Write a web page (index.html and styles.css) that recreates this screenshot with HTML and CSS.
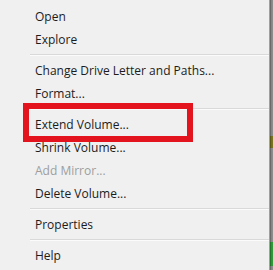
FILE: index.html
```html
<!DOCTYPE html>
<html lang="en">

<head>
    <meta charset="UTF-8" />
    <meta name="viewport" content="width=device-width, initial-scale=1" />
    <title>Volume context menu</title>
    <link rel="stylesheet" href="styles.css">
</head>

<body>
    <div class="menu">
        <div class="item">Open</div>
        <div class="item">Explore</div>
        <div class="sep"></div>
        <div class="item">Change Drive Letter and Paths...</div>
        <div class="item">Format...</div>
        <div class="sep"></div>
        <div class="item marked">Extend Volume...</div>
        <div class="item">Shrink Volume...</div>
        <div class="item disabled">Add Mirror...</div>
        <div class="item">Delete Volume...</div>
        <div class="sep"></div>
        <div class="item">Properties</div>
        <div class="sep"></div>
        <div class="item">Help</div>
    </div>
</body>

</html>
```

FILE: styles.css
```css
* {
    margin: 0;
    padding: 0;
    box-sizing: border-box;
}

body {
    width: 273px;
    height: 270px;
    overflow: hidden;
    font-family: "Open Sans", "Noto Sans", sans-serif;
    /* the disk management window peeking out on the right */
    background: linear-gradient(to bottom,
            #8c8c8c 0, #8c8c8c 136px,
            #7a7420 136px, #7a7420 148px,
            #8c8c8c 148px, #8c8c8c 242px,
            #2f9a3a 242px, #2f9a3a 266px,
            #8c8c8c 266px);
}

.menu {
    width: 270px;
    height: 270px;
    padding-top: 4.5px;
    background: #f0f0f0;
    border-right: 1px solid #a0a0a0;
    box-shadow: 1px 0 1px rgba(0, 0, 0, 0.25);
    display: flex;
    flex-direction: column;
}

.item {
    height: 23px;
    line-height: 23px;
    padding-left: 35px;
    font-size: 12px;
    color: #1c1c1c;
    white-space: nowrap;
    position: relative;
}

.item.disabled {
    color: #9e9e9e;
}

/* red annotation frame round "Extend Volume..." */
.item.marked::after {
    content: '';
    position: absolute;
    left: 23px;
    top: -9.5px;
    width: 170px;
    height: 39px;
    box-sizing: border-box;
    border: 6px solid #e3141e;
}

.sep {
    height: 8px;
    display: flex;
    flex-direction: column;
    justify-content: center;
    padding-left: 30px;
}

.sep::before {
    content: '';
    height: 1px;
    background: #d9d9d9;
    border-bottom: 1px solid #fbfbfb;
    box-sizing: content-box;
}
```
